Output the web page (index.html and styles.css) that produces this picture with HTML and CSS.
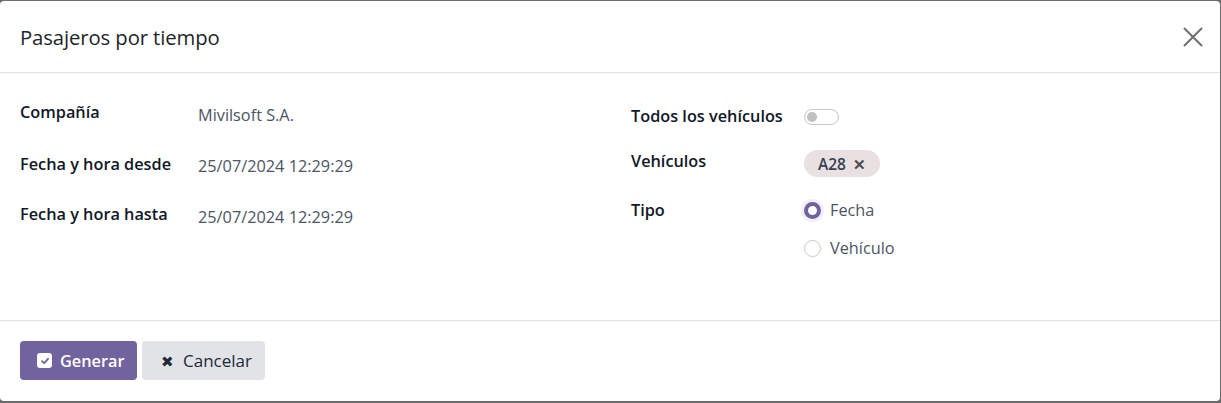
FILE: index.html
```html
<!DOCTYPE html>
<html lang="es">
<head>
<meta charset="utf-8">
<title>Pasajeros por tiempo</title>
<link rel="stylesheet" href="styles.css">
</head>
<body>
<div class="modal">
  <header class="modal-header">
    <h4 class="modal-title">Pasajeros por tiempo</h4>
    <button class="btn-close" aria-label="Cerrar">
      <svg width="20" height="20" viewBox="0 0 20 20"><path d="M1 1L19 19M19 1L1 19" stroke="#6f6f6f" stroke-width="2" fill="none"/></svg>
    </button>
  </header>
  <main class="modal-body">
    <div class="group">
      <div class="row r1"><div class="label">Compañía</div><div class="value">Mivilsoft S.A.</div></div>
      <div class="row r2"><div class="label">Fecha y hora desde</div><div class="value">25/07/2024 12:29:29</div></div>
      <div class="row r3"><div class="label">Fecha y hora hasta</div><div class="value">25/07/2024 12:29:29</div></div>
    </div>
    <div class="group right">
      <div class="row q1"><div class="label">Todos los vehículos</div><div class="value"><span class="switch"><span class="knob"></span></span></div></div>
      <div class="row q2"><div class="label">Vehículos</div><div class="value"><span class="tag">A28 <span class="tag-x">✕</span></span></div></div>
      <div class="row q3"><div class="label">Tipo</div>
        <div class="value radios">
          <label class="radio"><span class="dot checked"></span>Fecha</label>
          <label class="radio"><span class="dot"></span>Vehículo</label>
        </div>
      </div>
    </div>
  </main>
  <footer class="modal-footer">
    <button class="btn btn-primary"><span class="chk"><svg width="10" height="10" viewBox="0 0 10 10"><path d="M2 5.2L4.2 7.2L8 2.8" stroke="#71639e" stroke-width="1.8" fill="none" stroke-linecap="round" stroke-linejoin="round"/></svg></span>Generar</button>
    <button class="btn btn-secondary"><span class="xicon">✖</span>Cancelar</button>
  </footer>
</div>
</body>
</html>
```
FILE: styles.css
```css
* { box-sizing: border-box; }
html, body { margin: 0; padding: 0; }
body {
  background: #6b6b6b;
  width: 1221px;
  height: 403px;
  overflow: hidden;
  padding-top: 1px;
  font-family: "Open Sans", "Noto Sans", sans-serif;
  color: #212529;
}
.modal {
  background: #fff;
  height: 400px;
  width: 1220px;
  border-radius: 4px;
  display: flex;
  flex-direction: column;
}
.modal-header {
  height: 72px;
  border-bottom: 1px solid #dee2e6;
  display: flex;
  align-items: center;
  justify-content: space-between;
  padding: 0 17px 0 20px;
}
.modal-title {
  margin: 0;
  font-size: 20.3px;
  font-weight: 400;
  color: #212529;
  letter-spacing: -0.1px;
}
.btn-close {
  border: 0;
  background: none;
  padding: 0;
  width: 20px;
  height: 20px;
  display: flex;
}
.modal-body {
  height: 248px;
  border-bottom: 1px solid #dee2e6;
  display: grid;
  grid-template-columns: 611px 1fr;
  padding: 0 20px;
}
.group { display: flex; flex-direction: column; }
.row { display: flex; align-items: flex-start; font-size: 16.3px; line-height: 24px; }
.label {
  font-weight: 600;
  color: #111827;
  width: 178px;
  flex: none;
}
.right .label { width: 173px; }
.value { color: #4b5563; }
.r1 { margin-top: 27px; }
.r1 .value { padding-top: 3px; }
.r2 { margin-top: 25px; }
.r2 .value { padding-top: 2px; }
.r3 { margin-top: 24px; }
.r3 .value { padding-top: 3px; }
.q1 { margin-top: 31px; }
.q2 { margin-top: 21px; }
.q2 .value { padding-top: 1px; }
.q3 { margin-top: 21px; }
.switch {
  display: inline-block;
  width: 35px;
  height: 16px;
  border: 1px solid #c4c7cc;
  border-radius: 8px;
  position: relative;
  top: 3px;
  background: #fff;
}
.knob {
  position: absolute;
  left: 2px;
  top: 2px;
  width: 10px;
  height: 10px;
  border-radius: 50%;
  background: #c0c0c0;
}
.tag {
  display: inline-flex;
  align-items: center;
  gap: 7px;
  background: #e8e0e1;
  color: #374151;
  font-weight: 600;
  font-size: 15.5px;
  height: 27px;
  padding: 0 14px 0 14px;
  border-radius: 14px;
}
.tag-x { font-size: 15px; font-weight: 700; color: #4b4b4b; }
.radios { display: flex; flex-direction: column; gap: 14px; }
.radio { display: flex; align-items: center; gap: 9px; color: #4b5563; font-size: 16.3px; }
.dot {
  width: 17px; height: 17px;
  border-radius: 50%;
  border: 1px solid #c5c8cd;
  background: #fff;
  flex: none;
}
.dot.checked {
  border: 4.5px solid #71639e;
  box-shadow: 0 0 0 3px #f1eff5;
}
.modal-footer {
  flex: 1;
  display: flex;
  align-items: flex-start;
  gap: 5px;
  padding: 20px 20px 0;
}
.btn {
  height: 39px;
  border: 0;
  border-radius: 4px;
  font-family: inherit;
  font-size: 16.3px;
  font-weight: 600;
  display: inline-flex;
  align-items: center;
  padding: 0 12px 0 17px;
}
.btn-primary { background: #71639e; color: #fff; width: 117px; }
.btn-secondary { background: #e1e3e7; color: #1f2937; font-weight: 500; font-size: 17px; width: 123px; padding-left: 19px; }
.chk {
  width: 15px; height: 15px;
  background: #fff;
  border-radius: 3px;
  display: inline-flex;
  align-items: center;
  justify-content: center;
  margin-right: 8px;
}
.xicon { font-size: 15px; margin-right: 9px; color: #1f2937; }
```
